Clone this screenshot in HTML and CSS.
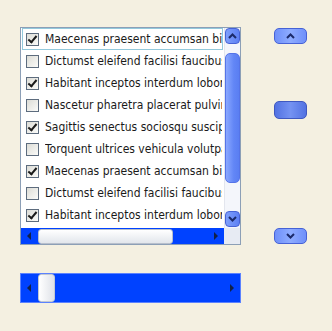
FILE: index.html
```html
<!DOCTYPE html>
<html lang="en">
<head>
    <meta charset="UTF-8">
    <title>List and scroll bars</title>
    <link rel="stylesheet" href="styles.css">
</head>
<body>
    <div class="page">
        <div class="left-column">
            <div class="listbox">
                <div class="list-main">
                    <div class="items">
                        <div class="item selected"><span class="check on"></span><span class="label">Maecenas praesent accumsan bibendum</span></div>
                        <div class="item"><span class="check"></span><span class="label">Dictumst eleifend facilisi faucibus</span></div>
                        <div class="item"><span class="check on"></span><span class="label">Habitant inceptos interdum lobortis</span></div>
                        <div class="item"><span class="check"></span><span class="label">Nascetur pharetra placerat pulvinar</span></div>
                        <div class="item"><span class="check on"></span><span class="label">Sagittis senectus sociosqu suscipit</span></div>
                        <div class="item"><span class="check"></span><span class="label">Torquent ultrices vehicula volutpat</span></div>
                        <div class="item"><span class="check on"></span><span class="label">Maecenas praesent accumsan bibendum</span></div>
                        <div class="item"><span class="check"></span><span class="label">Dictumst eleifend facilisi faucibus</span></div>
                        <div class="item"><span class="check on"></span><span class="label">Habitant inceptos interdum lobortis</span></div>
                    </div>
                    <div class="vscroll">
                        <div class="vbutton up">
                            <svg width="9" height="6" viewBox="0 0 9 6"><path d="M1 5 L4.5 1.5 L8 5" fill="none" stroke="#1b2a6b" stroke-width="2"/></svg>
                        </div>
                        <div class="vtrack">
                            <div class="vthumb"></div>
                        </div>
                        <div class="vbutton down">
                            <svg width="9" height="6" viewBox="0 0 9 6"><path d="M1 1 L4.5 4.5 L8 1" fill="none" stroke="#1b2a6b" stroke-width="2"/></svg>
                        </div>
                    </div>
                </div>
                <div class="list-bottom">
                    <div class="hscroll">
                        <span class="tri left"></span>
                        <div class="hthumb"></div>
                        <span class="hfill"></span>
                        <span class="tri right"></span>
                    </div>
                    <div class="corner"></div>
                </div>
            </div>

            <div class="slider">
                <span class="tri left"></span>
                <div class="slider-thumb"></div>
                <span class="hfill"></span>
                <span class="tri right"></span>
            </div>
        </div>

        <div class="right-column">
            <div class="pill-button">
                <svg width="9" height="6" viewBox="0 0 9 6"><path d="M1 5 L4.5 1.5 L8 5" fill="none" stroke="#1b2a6b" stroke-width="2"/></svg>
            </div>
            <div class="pill-thumb"></div>
            <div class="pill-button">
                <svg width="9" height="6" viewBox="0 0 9 6"><path d="M1 1 L4.5 4.5 L8 1" fill="none" stroke="#1b2a6b" stroke-width="2"/></svg>
            </div>
        </div>
    </div>
</body>
</html>
```

FILE: styles.css
```css
body {
    margin: 0;
    background-color: #f4f0e1;
    font-family: "DejaVu Sans Condensed", "DejaVu Sans", sans-serif;
    font-stretch: condensed;
    font-size: 12px;
    color: #1a1a1a;
}

.page {
    display: flex;
    padding: 27px 0 0 20px;
}

.left-column {
    width: 221px;
    display: flex;
    flex-direction: column;
}

/* list box */
.listbox {
    height: 218px;
    box-sizing: border-box;
    border: 1px solid #8c9fb6;
    background-color: #fff;
    display: flex;
    flex-direction: column;
}

.list-main {
    display: flex;
    height: 200px;
}

.items {
    flex: 1;
    overflow: hidden;
}

.item {
    height: 22px;
    box-sizing: border-box;
    display: flex;
    align-items: center;
    padding-left: 3px;
    white-space: nowrap;
    border: 1px solid transparent;
    margin: 0 1px;
}

.item.selected {
    border-color: #93c9dc;
}

.check {
    width: 13px;
    height: 13px;
    flex: none;
    box-sizing: border-box;
    border: 1px solid #5d6c7e;
    background: linear-gradient(135deg, #dcdcd6, #fbfbf9);
    margin-right: 6px;
    position: relative;
}

.check.on::after {
    content: "";
    position: absolute;
    left: 3px;
    top: 0;
    width: 3px;
    height: 7px;
    border: solid #1a1a1a;
    border-width: 0 2px 2px 0;
    transform: rotate(40deg);
}

.label {
    overflow: hidden;
}

/* vertical scroll bar */
.vscroll {
    width: 16px;
    display: flex;
    flex-direction: column;
    background-color: #f4f6fb;
    border-left: 1px solid #e3e6ee;
    box-sizing: border-box;
}

.vbutton {
    height: 16px;
    flex: none;
    box-sizing: border-box;
    border: 1px solid #4662d6;
    border-radius: 4px;
    background: linear-gradient(90deg, #7e9ffb, #5d80f4);
    display: flex;
    align-items: center;
    justify-content: center;
}

.vbutton.down {
    margin-bottom: 1px;
}

.vtrack {
    flex: 1;
    padding: 9px 0 28px;
    display: flex;
}

.vthumb {
    flex: 1;
    border: 1px solid #5574e8;
    border-radius: 5px;
    background: linear-gradient(90deg, #8aa8ff, #6286f6 60%, #5a7ef2);
}

/* horizontal scroll bars */
.list-bottom {
    display: flex;
    height: 16px;
}

.hscroll {
    flex: 1;
    display: flex;
    align-items: center;
    background-color: #0042ff;
}

.corner {
    width: 16px;
    background-color: #e7ebf3;
}

.tri {
    width: 0;
    height: 0;
    border-top: 4px solid transparent;
    border-bottom: 4px solid transparent;
    flex: none;
}

.tri.left {
    border-right: 4px solid #10204a;
    margin: 0 7px 0 6px;
}

.tri.right {
    border-left: 4px solid #10204a;
    margin: 0 6px;
}

.hthumb {
    width: 135px;
    height: 15px;
    box-sizing: border-box;
    border: 1px solid #b7bfcc;
    border-radius: 3px;
    background: linear-gradient(180deg, #ffffff, #e2e6ec);
}

.hfill {
    flex: 1;
}

/* standalone slider */
.slider {
    margin-top: 28px;
    height: 30px;
    box-sizing: border-box;
    border: 1px solid #5b82ff;
    background-color: #0042ff;
    display: flex;
    align-items: center;
}

.slider-thumb {
    width: 17px;
    height: 28px;
    box-sizing: border-box;
    border: 1px solid #c3c9d2;
    border-radius: 3px;
    background: linear-gradient(90deg, #ffffff, #dfe2e8);
}

/* right column buttons */
.right-column {
    margin-left: 33px;
    padding-top: 1px;
    display: flex;
    flex-direction: column;
}

.pill-button {
    width: 33px;
    height: 16px;
    box-sizing: border-box;
    border: 1px solid #4662d6;
    border-radius: 5px;
    background: linear-gradient(90deg, #6f90fa, #8eacff 50%, #6f90fa);
    display: flex;
    align-items: center;
    justify-content: center;
}

.pill-thumb {
    width: 33px;
    height: 18px;
    margin: 57px 0 109px;
    box-sizing: border-box;
    border: 1px solid #3f58c0;
    border-radius: 5px;
    background: linear-gradient(90deg, #5272e2, #7492f2 50%, #5272e2);
}
```
